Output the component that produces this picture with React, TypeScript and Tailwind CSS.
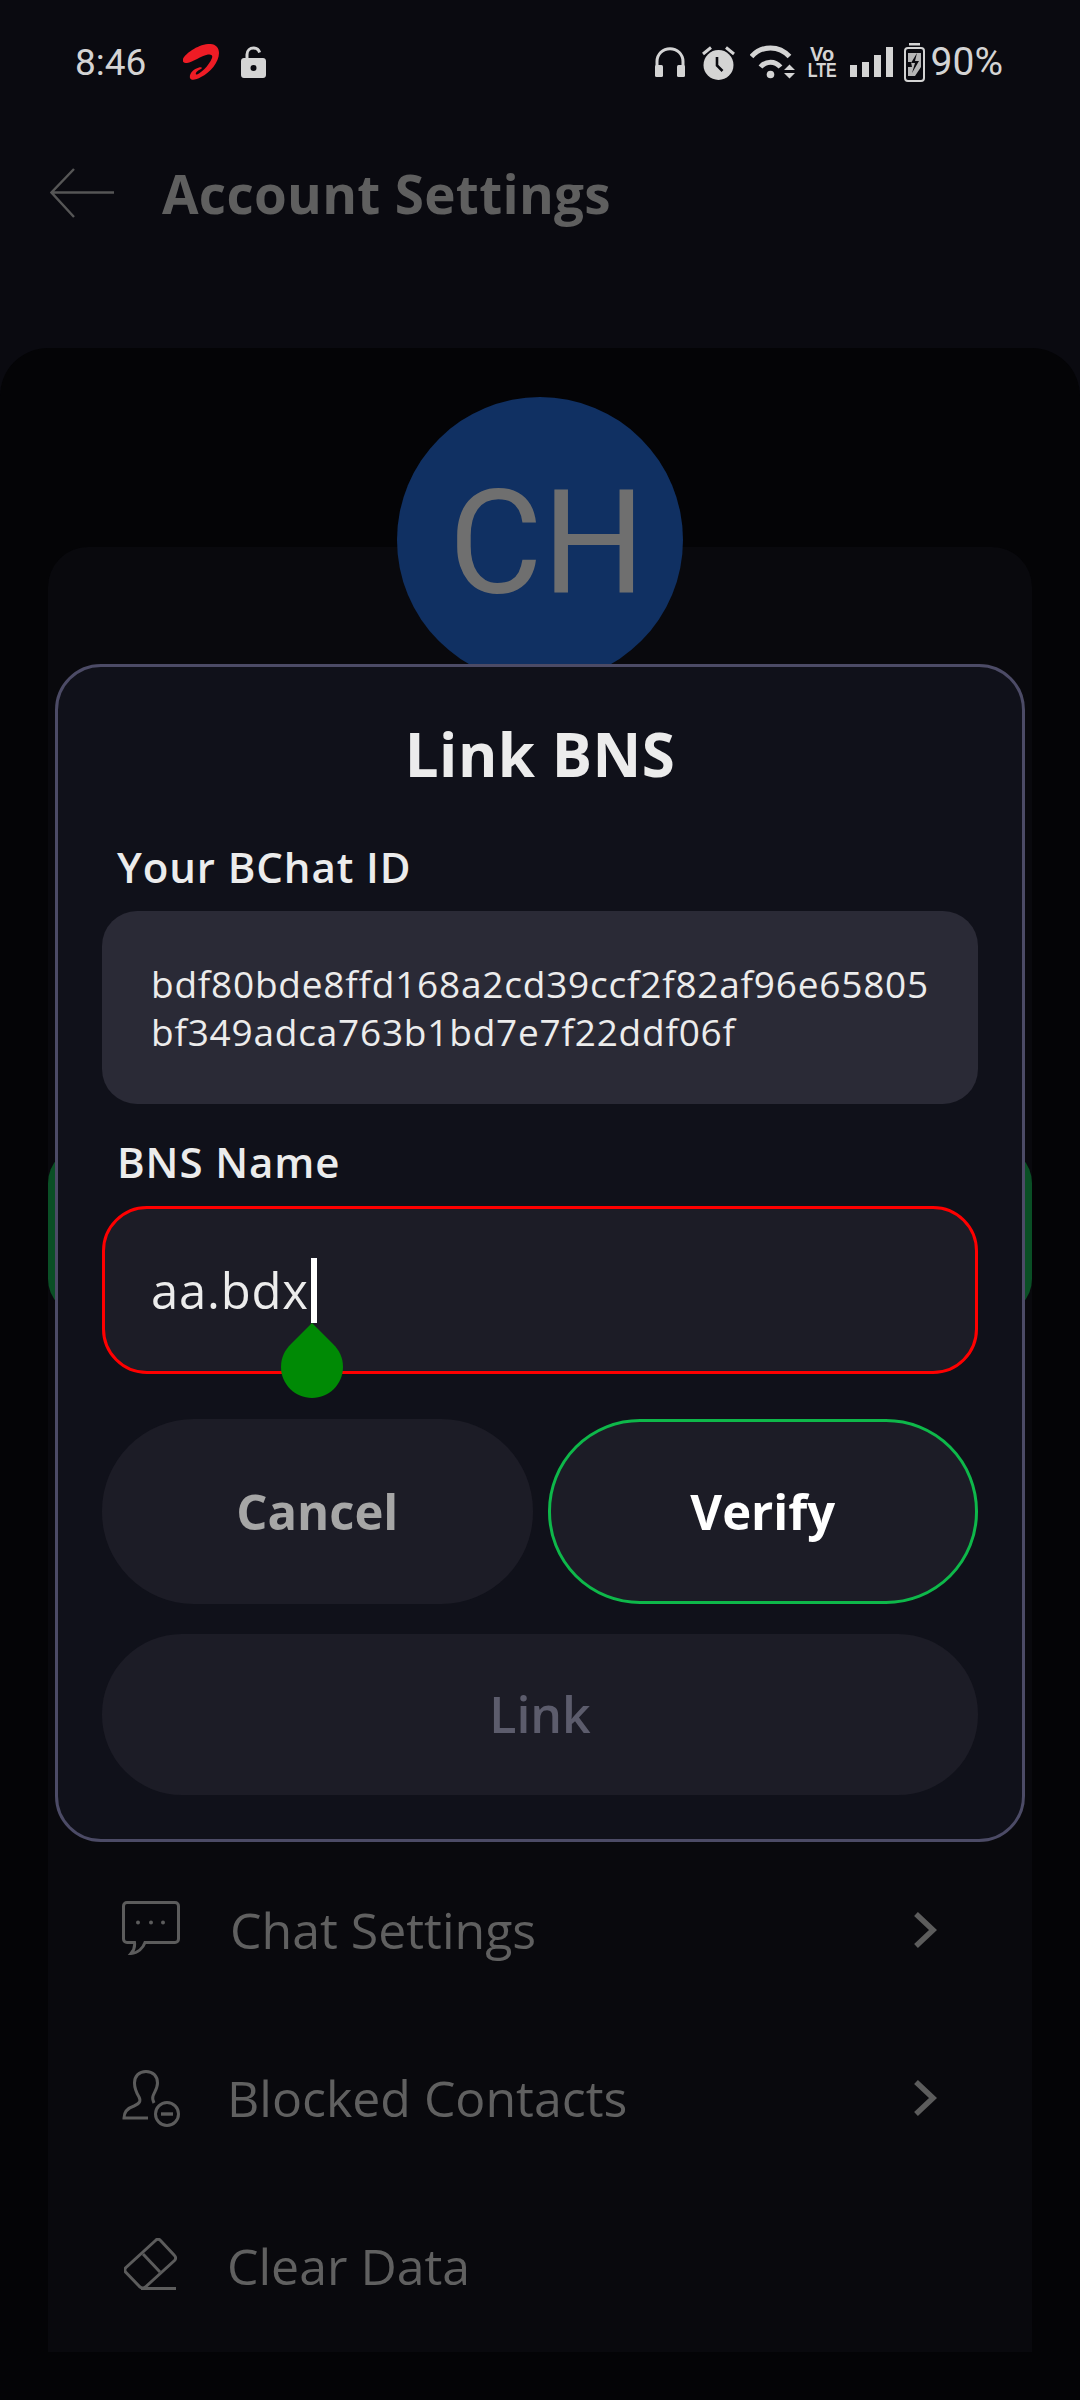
import React from 'react';

const font = { sans: 'font-["Open_Sans",sans-serif]' };

function AirtelLogo() {
  return (
    <svg width="36" height="36" viewBox="0 0 36 36" className="block">
      <path
        fill="#ee1c25"
        d="M0 15C2 10 14 1 25 0C32-.5 36 3 36 9C36 18 27 29 18 33C13 36 8 37 7 34C6 30 10 25 16 23.5C18 23 20 23.5 18 25C15 26 12 29 13 30.5C16 31 26 22 29 14C30 11 28 10 25 10.5C18 12 10 18 4 19C1 19-1 18 0 15Z"
      />
    </svg>
  );
}

function LockIcon() {
  return (
    <svg width="25" height="32" viewBox="0 0 25 32" className="block">
      <path d="M6 13V8.5C6 4.5 9 2 12.5 2C15.5 2 17.8 3.8 18.6 6.5" fill="none" stroke="#d4d4d4" strokeWidth="3" />
      <path
        fillRule="evenodd"
        fill="#d4d4d4"
        d="M3 12H22C23.7 12 25 13.3 25 15V29C25 30.7 23.7 32 22 32H3C1.3 32 0 30.7 0 29V15C0 13.3 1.3 12 3 12ZM12.5 19A3 3 0 1 0 12.5 25A3 3 0 1 0 12.5 19Z"
      />
    </svg>
  );
}

function StatusIcons() {
  return (
    <div className="flex items-center text-[#d4d4d4]">
      {/* headphones */}
      <svg width="30" height="30" viewBox="0 0 30 30" className="block">
        <path d="M2 20V14.5C2 7 8 1.7 15 1.7C22 1.7 28 7 28 14.5V20" fill="none" stroke="currentColor" strokeWidth="3" />
        <rect x="0" y="18" width="8" height="12" rx="1.5" fill="currentColor" />
        <rect x="22" y="18" width="8" height="12" rx="1.5" fill="currentColor" />
      </svg>
      {/* alarm */}
      <svg width="34" height="35" viewBox="0 0 34 35" className="block ml-[17px]">
        <circle cx="16.5" cy="20" r="15" fill="currentColor" />
        <path d="M1 9L9 2.5M32 9L24 2.5" stroke="currentColor" strokeWidth="3" />
        <path d="M15 12V20.5L20.5 26" fill="none" stroke="#0a0a10" strokeWidth="2.6" />
      </svg>
      {/* wifi */}
      <svg width="46" height="34" viewBox="0 0 46 34" className="block ml-[14px]">
        <path d="M1.5 11.5C12 0 29 0 39.5 11.5" fill="none" stroke="currentColor" strokeWidth="5" />
        <path d="M10.5 22C16 15.5 25 15.5 30.5 22" fill="none" stroke="currentColor" strokeWidth="5" />
        <circle cx="20.5" cy="29.5" r="3.8" fill="currentColor" />
        <path d="M34 25L39.5 19.5L45 25ZM34 28L39.5 33.5L45 28Z" fill="currentColor" />
      </svg>
      {/* VoLTE */}
      <div className='ml-[15px] flex w-[23px] flex-col items-center font-["Liberation_Sans",sans-serif] leading-[16px] font-bold'>
        <span className="text-[20px]">Vo</span>
        <span className="scale-x-[0.8] text-[20px]">LTE</span>
      </div>
      {/* signal */}
      <div className="ml-[16px] flex h-[30px] items-end gap-[5px]">
        <span className="h-[12px] w-[7px] bg-current" />
        <span className="h-[15px] w-[7px] bg-current" />
        <span className="h-[22px] w-[7px] bg-current" />
        <span className="h-[30px] w-[7px] bg-current" />
      </div>
      {/* battery */}
      <svg width="21" height="39" viewBox="0 0 21 39" className="block ml-[11px]">
        <rect x="5" y="0" width="11" height="2.5" fill="currentColor" />
        <rect x="1" y="5" width="19" height="33" rx="3" fill="none" stroke="currentColor" strokeWidth="2" />
        <path d="M4 10H17V24L11 33H4V24L8 24L7 19H4Z" fill="currentColor" opacity="0.85" />
        <path d="M13 10L7 20H11L8 30L15 18H11Z" fill="#0a0a10" />
      </svg>
      <span className='ml-[6px] font-["Roboto",sans-serif] text-[39px] leading-none'>90%</span>
    </div>
  );
}

function BackArrow() {
  return (
    <svg width="64" height="50" viewBox="0 0 64 50" className="block">
      <path d="M64 24.5H2M24 1L1.5 24.5L24 49" fill="none" stroke="#565656" strokeWidth="2.4" />
    </svg>
  );
}

function ChatIcon() {
  return (
    <svg width="58" height="54" viewBox="0 0 58 54" fill="none" stroke="#5c5c5c" strokeWidth="3" className="-mt-[4px] block">
      <path d="M5 1.5H53C55 1.5 56.5 3 56.5 5V38C56.5 40 55 41.5 53 41.5H23C21 47 16 52 9 52.5C12 49 13 45 12.5 41.5H5C3 41.5 1.5 40 1.5 38V5C1.5 3 3 1.5 5 1.5Z" />
      <circle cx="16" cy="21.5" r="2" fill="#5c5c5c" stroke="none" />
      <circle cx="29" cy="21.5" r="2" fill="#5c5c5c" stroke="none" />
      <circle cx="41" cy="21.5" r="2" fill="#5c5c5c" stroke="none" />
    </svg>
  );
}

function BlockedIcon() {
  return (
    <svg width="58" height="57" viewBox="0 0 58 57" fill="none" stroke="#5c5c5c" strokeWidth="3" className="block">
      <path d="M26 48H2C2 42 6 38 12 36C18 33.5 19 31 17 27C14 22 12.5 18 12.5 13C12.5 6 17 1.5 24 1.5C31 1.5 35.5 6 35.5 13C35.5 18 33 21 31 26C30 29 31 31 32 33" />
      <circle cx="45" cy="44" r="11.5" />
      <path d="M39 44H51" strokeWidth="3.4" />
    </svg>
  );
}

function EraserIcon() {
  return (
    <svg width="54" height="52" viewBox="0 0 54 52" fill="none" stroke="#5c5c5c" strokeWidth="3" className="-mt-[4px] block">
      <path d="M31.5 2.5C33 1 35 1 36.5 2.5L50.5 17.5C52 19 52 21 50.5 22.5L22 48.5C20 50.5 18 50.5 16 49L2 34.5C.5 33 .5 31 2 29.5Z" />
      <path d="M19 16L36 34" />
      <path d="M17 50.5H52" />
    </svg>
  );
}

function Chevron() {
  return (
    <svg width="24" height="36" viewBox="0 0 24 36" className="block">
      <path d="M3 2L20 18L3 34" fill="none" stroke="#5c5c5c" strokeWidth="5.5" />
    </svg>
  );
}

function SettingsRow({
  icon,
  label,
  gap,
  chevron = true,
}: {
  icon: React.ReactNode;
  label: string;
  gap: string;
  chevron?: boolean;
}) {
  return (
    <div className="flex h-[168px] items-center pr-[95px] pl-[74px]">
      <div className="flex w-[58px] justify-center">{icon}</div>
      <span className={`${gap} flex-1 text-[50px] leading-none text-[#606060]`}>{label}</span>
      {chevron && <Chevron />}
    </div>
  );
}

function LinkBnsDialog() {
  return (
    <div className="absolute inset-x-[55px] top-[664px] z-20 flex h-[1178px] flex-col rounded-[46px] border-[3px] border-[#4c4b66] bg-[#10111a] px-[44px]">
      <h2 className="mt-[52px] h-[70px] text-center text-[60px] leading-[70px] font-bold tracking-[0.5px] text-[#ececec]">Link BNS</h2>

      <label className="mt-[53px] ml-[15px] h-[50px] text-[42px] leading-[50px] font-semibold tracking-[0.9px] text-[#ececec]">
        Your BChat ID
      </label>
      <div className="mt-[19px] flex h-[193px] flex-col justify-center rounded-[35px] bg-[#2a2a36] pl-[49px] text-[37px] leading-[48px] tracking-[0.78px] whitespace-nowrap text-[#ececec]">
        <span>bdf80bde8ffd168a2cd39ccf2f82af96e65805</span>
        <span>bf349adca763b1bd7e7f22ddf06f</span>
      </div>

      <label className="mt-[33px] ml-[15px] h-[50px] text-[42px] leading-[50px] font-semibold tracking-[0.9px] text-[#ececec]">
        BNS Name
      </label>
      <div className="relative mt-[19px] flex h-[168px] items-center rounded-[45px] border-[3px] border-[#ff0000] bg-[#1c1c26] pl-[46px]">
        <span className="text-[49px] leading-none tracking-[0.8px] text-[#ececec]">aa.bdx</span>
        <span className="ml-[2px] h-[65px] w-[6px] bg-white" />
        {/* text selection handle */}
        <svg width="62" height="75" viewBox="0 0 62 75" className="absolute top-[114px] left-[176px] block">
          <path d="M31 0L52 21C58 27 62 34 62 44C62 61 48 75 31 75C14 75 0 61 0 44C0 34 4 27 10 21Z" fill="#008a05" />
        </svg>
      </div>

      <div className="mt-[45px] grid h-[185px] grid-cols-2 gap-[15px] text-[49px] font-bold">
        <button className="rounded-[92px] bg-[#1c1c26] text-[#a6a6a6]">Cancel</button>
        <button className="rounded-[92px] border-[3px] border-[#0eb84a] bg-[#1c1c26] text-white">Verify</button>
      </div>
      <button className="mt-[30px] h-[161px] rounded-[80px] bg-[#1c1c26] text-[50px] font-semibold text-[#5c5c6c]">Link</button>
    </div>
  );
}

export default function App() {
  return (
    <div className={`relative h-[2400px] w-[1080px] overflow-hidden bg-[#0a0a10] ${font.sans}`}>
      {/* status bar */}
      <div className="flex h-[124px] items-center justify-between pr-[77px] pl-[75px]">
        <div className="flex items-center">
          <span className='w-[108px] font-["Roboto",sans-serif] text-[37px] leading-none text-[#d4d4d4]'>8:46</span>
          <AirtelLogo />
          <span className="ml-[22px]">
            <LockIcon />
          </span>
        </div>
        <StatusIcons />
      </div>

      {/* header */}
      <div className="flex h-[138px] items-center pl-[50px]">
        <BackArrow />
        <h1 className="ml-[48px] text-[53px] leading-none font-bold tracking-[0.3px] text-[#5f5f5f]">Account Settings</h1>
      </div>

      {/* settings panel, dimmed behind the dialog */}
      <div className="mt-[86px] h-[2052px] rounded-t-[48px] bg-[#040406] pt-[49px]">
        <div className='relative z-10 mx-auto -mb-[136px] flex h-[286px] w-[286px] items-center justify-center rounded-full bg-[#103062] pt-[8px] pl-[14px] font-["Roboto",sans-serif] text-[144px] leading-none font-[430] text-[#6f6f6f]'>
          CH
        </div>
        <div className="mx-[48px] h-[1805px] rounded-t-[40px] bg-[#09090d] pt-[600px]">
          <div className="h-[168px] rounded-[36px] bg-[#0a4f25]" />
          <div className="mt-[531px]">
            <SettingsRow icon={<ChatIcon />} label="Chat Settings" gap="ml-[50px]" />
            <SettingsRow icon={<BlockedIcon />} label="Blocked Contacts" gap="ml-[47px]" />
            <SettingsRow icon={<EraserIcon />} label="Clear Data" gap="ml-[47px]" chevron={false} />
          </div>
        </div>
      </div>

      <LinkBnsDialog />
    </div>
  );
}
